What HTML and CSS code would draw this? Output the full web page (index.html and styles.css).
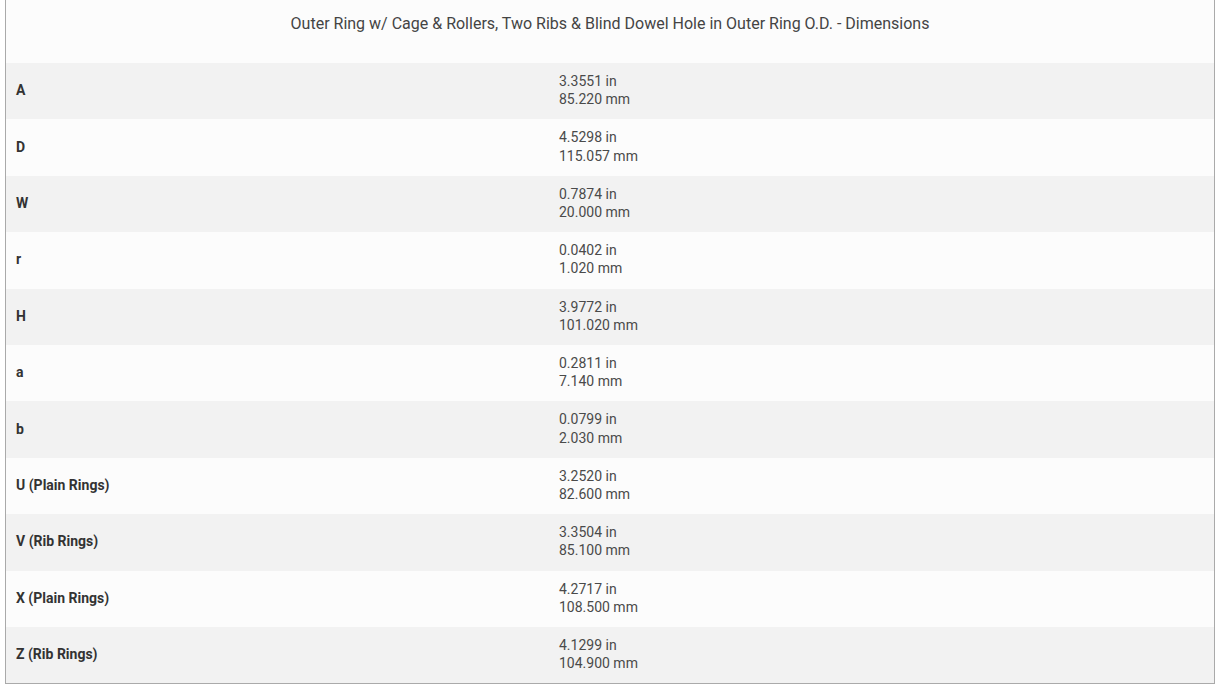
FILE: index.html
```html
<!DOCTYPE html>
<html>
<head>
<meta charset="utf-8">
<link rel="stylesheet" href="styles.css">
</head>
<body>
<div class="wrap">
<table class="dims">
<thead>
<tr><th colspan="2" class="title">Outer Ring w/ Cage &amp; Rollers, Two Ribs &amp; Blind Dowel Hole in Outer Ring O.D. - Dimensions</th></tr>
</thead>
<tbody>
<tr><td class="lbl">A</td><td class="val">3.3551 in<br>85.220 mm</td></tr>
<tr><td class="lbl">D</td><td class="val">4.5298 in<br>115.057 mm</td></tr>
<tr><td class="lbl">W</td><td class="val">0.7874 in<br>20.000 mm</td></tr>
<tr><td class="lbl">r</td><td class="val">0.0402 in<br>1.020 mm</td></tr>
<tr><td class="lbl">H</td><td class="val">3.9772 in<br>101.020 mm</td></tr>
<tr><td class="lbl">a</td><td class="val">0.2811 in<br>7.140 mm</td></tr>
<tr><td class="lbl">b</td><td class="val">0.0799 in<br>2.030 mm</td></tr>
<tr><td class="lbl">U (Plain Rings)</td><td class="val">3.2520 in<br>82.600 mm</td></tr>
<tr><td class="lbl">V (Rib Rings)</td><td class="val">3.3504 in<br>85.100 mm</td></tr>
<tr><td class="lbl">X (Plain Rings)</td><td class="val">4.2717 in<br>108.500 mm</td></tr>
<tr><td class="lbl">Z (Rib Rings)</td><td class="val">4.1299 in<br>104.900 mm</td></tr>
</tbody>
</table>
</div>
</body>
</html>
```
FILE: styles.css
```css
html, body {
  margin: 0;
  padding: 0;
  background: #ffffff;
}
.wrap {
  padding-left: 5px;
}
.dims {
  width: 1210px;
  border-collapse: collapse;
  border: 1px solid #aaaaaa;
  border-top: none;
  font-family: Roboto, "Liberation Sans", sans-serif;
  font-size: 14px;
  line-height: 18.2px;
  background: #fcfcfc;
}
.title {
  font-weight: normal;
  font-size: 16px;
  line-height: 20px;
  color: #444444;
  text-align: center;
  height: 63px;
  padding: 0;
  vertical-align: top;
  padding-top: 14px;
  box-sizing: border-box;
}
.dims tbody tr:nth-child(odd) {
  background: #f2f2f2;
}
.dims tbody tr:nth-child(even) {
  background: #fcfcfc;
}
.dims td {
  padding: 9px 10px 11px;
  vertical-align: middle;
}
.lbl {
  width: 523px;
  font-weight: bold;
  color: #333333;
}
.val {
  color: #4a4a4a;
}
```
